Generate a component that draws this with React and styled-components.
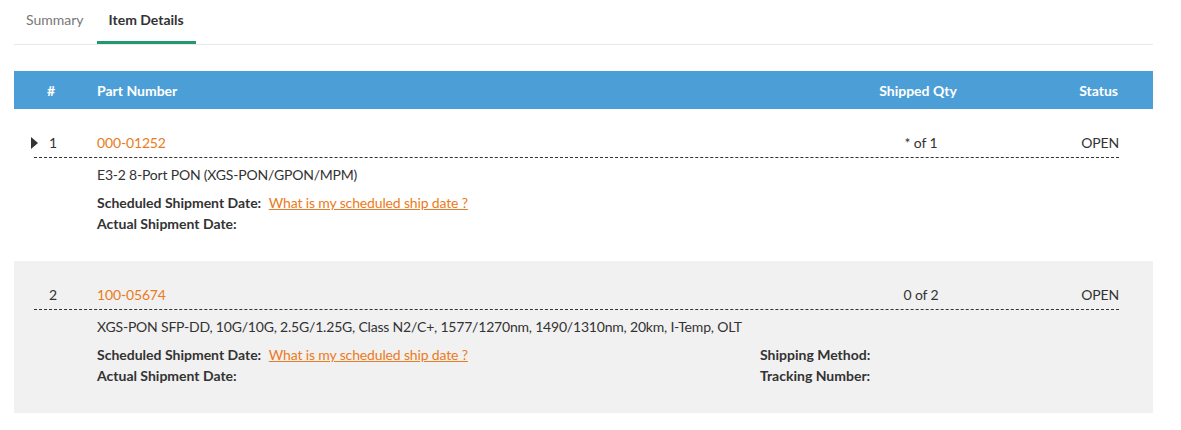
import React from "react";
import styled, { createGlobalStyle } from "styled-components";

const Global = createGlobalStyle`
  html, body { margin: 0; padding: 0; background: #fff; }
  body { font-family: Lato, "Open Sans", sans-serif; font-size: 14px; color: #333; }
`;

const Page = styled.div`
  padding: 0 28px 0 14px;
`;

const TabList = styled.div`
  display: flex;
  gap: 1px;
  border-bottom: 1px solid #e8e8e8;
`;

const Tab = styled.div`
  padding: 11px 12px 12px;
  line-height: 18px;
  font-size: 14px;
  color: ${(p) => (p.$active ? "#333" : "#777")};
  font-weight: ${(p) => (p.$active ? 700 : 400)};
  border-bottom: 3px solid ${(p) => (p.$active ? "#25976f" : "transparent")};
`;

const Table = styled.div`
  margin-top: 26px;
`;

const cols = "63px 1fr 90px 153px";

const HeaderRow = styled.div`
  display: grid;
  grid-template-columns: ${cols};
  align-items: center;
  height: 38px;
  padding: 0 34px 0 20px;
  background: #4c9fd6;
  color: #fff;
  font-weight: 700;
  font-size: 14px;
`;

const Cell = styled.div`
  position: relative;
  text-align: ${(p) => p.$align || "left"};
  padding-left: ${(p) => p.$pl || 0}px;
  padding-right: ${(p) => p.$pr || 0}px;
`;

const Row = styled.div`
  padding: 25px 34px 27px 20px;
  background: ${(p) => (p.$alt ? "#f1f1f1" : "#fff")};
`;

const MainLine = styled.div`
  display: grid;
  grid-template-columns: ${cols};
  line-height: 18px;
  padding-bottom: 5px;
  border-bottom: 1px dashed #333;
  letter-spacing: -0.15px;
`;

const Arrow = styled.span`
  position: absolute;
  left: -3px;
  top: 3px;
  width: 0;
  height: 0;
  border-top: 6px solid transparent;
  border-bottom: 6px solid transparent;
  border-left: 7px solid #333;
`;

const PartNo = styled.span`
  color: #ec7a21;
`;

const Details = styled.div`
  padding-left: 63px;
`;

const Description = styled.div`
  margin-top: 8px;
  line-height: 18px;
  letter-spacing: -0.2px;
`;

const Info = styled.div`
  margin-top: 8px;
  display: grid;
  grid-template-columns: 663px 1fr;
`;

const InfoLine = styled.div`
  line-height: 21px;
  white-space: nowrap;
`;

const Label = styled.span`
  font-weight: 700;
`;

const Link = styled.a`
  color: #ec7a21;
  text-decoration: underline;
  margin-left: 4px;
  letter-spacing: -0.15px;
  cursor: pointer;
`;

const items = [
  {
    n: 1,
    part: "000-01252",
    qty: "* of 1",
    status: "OPEN",
    desc: "E3-2 8-Port PON (XGS-PON/GPON/MPM)",
    expand: true,
    shipping: false,
  },
  {
    n: 2,
    part: "100-05674",
    qty: "0 of 2",
    status: "OPEN",
    desc: "XGS-PON SFP-DD, 10G/10G, 2.5G/1.25G, Class N2/C+, 1577/1270nm, 1490/1310nm, 20km, I-Temp, OLT",
    expand: false,
    shipping: true,
  },
];

export default function App() {
  return (
    <Page>
      <Global />
      <TabList>
        <Tab>Summary</Tab>
        <Tab $active>Item Details</Tab>
      </TabList>
      <Table>
        <HeaderRow>
          <Cell $pl={13}>#</Cell>
          <Cell>Part Number</Cell>
          <Cell $align="center" $pr={6}>Shipped Qty</Cell>
          <Cell $align="right" $pr={1}>Status</Cell>
        </HeaderRow>
        {items.map((it, i) => (
          <Row key={it.n} $alt={i % 2 === 1}>
            <MainLine>
              <Cell $pl={15}>
                {it.expand && <Arrow />}
                {it.n}
              </Cell>
              <Cell>
                <PartNo>{it.part}</PartNo>
              </Cell>
              <Cell $align="center">{it.qty}</Cell>
              <Cell $align="right">{it.status}</Cell>
            </MainLine>
            <Details>
              <Description>{it.desc}</Description>
              <Info>
                <div>
                  <InfoLine>
                    <Label>Scheduled Shipment Date:</Label>{" "}
                    <Link>What is my scheduled ship date ?</Link>
                  </InfoLine>
                  <InfoLine>
                    <Label>Actual Shipment Date:</Label>
                  </InfoLine>
                </div>
                {it.shipping && (
                  <div>
                    <InfoLine>
                      <Label>Shipping Method:</Label>
                    </InfoLine>
                    <InfoLine>
                      <Label>Tracking Number:</Label>
                    </InfoLine>
                  </div>
                )}
              </Info>
            </Details>
          </Row>
        ))}
      </Table>
    </Page>
  );
}
